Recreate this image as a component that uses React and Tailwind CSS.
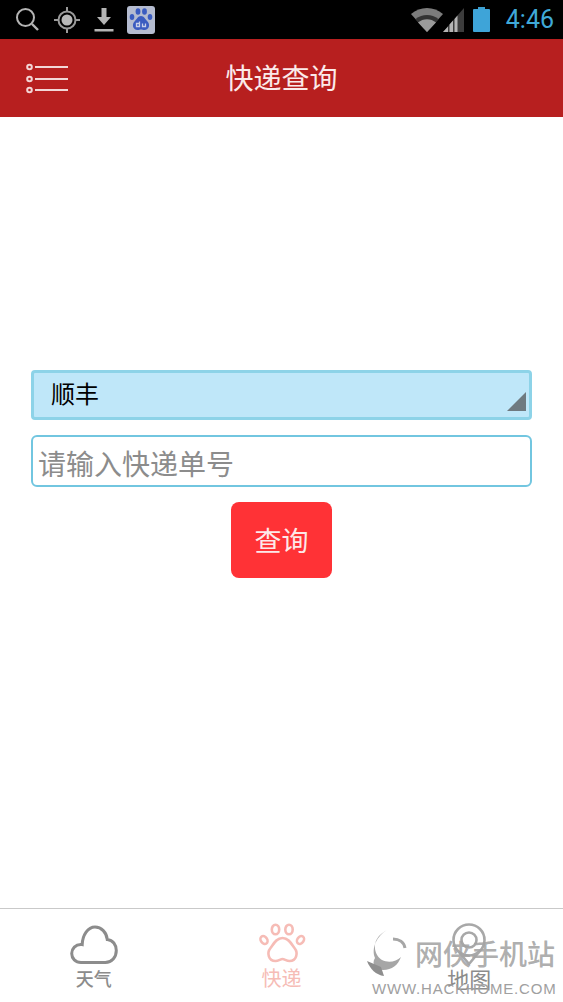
const cjk = { fontFamily: '"Noto Sans CJK SC", "Noto Sans", sans-serif' };
const Search = () => (
  <svg width="26" height="26" viewBox="0 0 26 26" fill="none" stroke="#b4b4b4" strokeWidth="2">
    <circle cx="10.500" cy="10.500" r="8.500" />
    <path d="M17 17l6 6" strokeWidth="2.400" />
  </svg>
);
const Gps = () => (
  <svg width="28" height="28" viewBox="0 0 28 28" fill="none" stroke="#9a9a9a" strokeWidth="2">
    <circle cx="14" cy="14" r="8.500" />
    <circle cx="14" cy="14" r="5.500" fill="#b8b8b8" stroke="none" />
    <path d="M14 1v4M14 23v4M1 14h4M23 14h4" />
  </svg>
);
const Download = () => (
  <svg width="22" height="28" viewBox="0 0 22 28" fill="#b4b4b4">
    <path d="M8.500 2h5v9h4.500l-7 8-7-8h4.500z" />
    <rect x="1.500" y="23" width="19" height="2.500" />
  </svg>
);
const Baidu = () => (
  <svg width="28" height="28" viewBox="0 0 28 28">
    <rect width="28" height="28" rx="3" fill="#b5bcd0" />
    <g fill="#3b5cc0">
      <ellipse cx="5" cy="11" rx="2.300" ry="3" />
      <ellipse cx="11" cy="5.500" rx="2.400" ry="3.200" />
      <ellipse cx="17.500" cy="5.500" rx="2.400" ry="3.200" />
      <ellipse cx="23" cy="11" rx="2.300" ry="3" />
      <path d="M14 10c3 0 4 3 6.500 5.500 3 3 1.500 8.500-3 8.500-1.500 0-2.500-.5-3.500-.5s-2 .5-3.500.5c-4.500 0-6-5.500-3-8.500C10 13 11 10 14 10z" />
    </g>
    <path d="M12.500 15.500v5h-3v-3h3M15.500 17.500v3h3v-3" fill="none" stroke="#c8d0e8" strokeWidth="1.300" />
  </svg>
);
const Wifi = () => (
  <svg width="32" height="24" viewBox="0 0 32 24">
    <path d="M16 24L0 6c9-8 23-8 32 0z" fill="#7c7c7c" />
    <path d="M16 24L4.500 11c7-5.500 16-5.500 23 0z" fill="#333" />
    <path d="M16 24L7 14.500c5-4.500 13-4.500 18 0z" fill="#9a9a9a" />
  </svg>
);
const Signal = () => (
  <svg width="21" height="24" viewBox="0 0 21 24">
    <path d="M0 24L21 0v24z" fill="#3c3c3c" />
    <path d="M0 24l5-5.500V24zM6.500 24v-7.500L10 12.500V24zM11.500 24V11l3-3.500V24z" fill="#b4b4b4" />
  </svg>
);
const Battery = () => (
  <svg width="17" height="25" viewBox="0 0 17 25">
    <rect x="5" y="0" width="7" height="3" fill="#3c9fd0" />
    <rect x="0" y="2" width="17" height="23" rx="1" fill="#3ea4d8" />
  </svg>
);
const Menu = () => (
  <svg width="44" height="32" viewBox="0 0 44 32" fill="none" stroke="#f3d6d6" strokeWidth="2">
    <circle cx="4.500" cy="4" r="2.300" />
    <circle cx="4.500" cy="16" r="2.300" />
    <circle cx="4.500" cy="27" r="2.300" />
    <path d="M10 4h33M10 16h33M10 27h33" />
  </svg>
);
const Cloud = () => (
  <svg width="48" height="40" viewBox="0 0 48 40" fill="none" stroke="#8c8c8c" strokeWidth="3">
    <path d="M11 37.500C5.500 37.500 1.700 33.500 1.700 28.500c0-5 4-9 9-9 .5 0 1 0 1.500.1C12.500 10 18 2 25 2c6.500 0 11.500 5.500 12.300 12.500 5.500.5 9 5 9 11 0 6.500-4.500 12-11 12z" />
  </svg>
);
const Paw = () => (
  <svg width="48" height="42" viewBox="0 0 48 42" fill="none" stroke="#f6bcb6" strokeWidth="2.600">
    <ellipse cx="6" cy="17" rx="3.200" ry="4.200" transform="rotate(-35 6 17)" />
    <ellipse cx="17.500" cy="6.500" rx="3.700" ry="4.800" />
    <ellipse cx="31" cy="6.500" rx="3.700" ry="4.800" />
    <ellipse cx="42.500" cy="17" rx="3.200" ry="4.200" transform="rotate(35 42.500 17)" />
    <path d="M24.500 15c6 0 9 6 12 10 4 5 2 13-5 13-3 0-5-2-7-2s-4 2-7 2c-7 0-9-8-5-13 3-4 6-10 12-10z" />
  </svg>
);
const Pin = () => (
  <svg width="40" height="42" viewBox="0 0 40 42" fill="none" stroke="#a8a8a8" strokeWidth="2.600">
    <circle cx="20" cy="17" r="15.500" />
    <circle cx="20" cy="17" r="7.500" />
    <path d="M10 29l10 12 10-12" />
  </svg>
);
const WatermarkLogo = () => (
  <svg width="42" height="46" viewBox="0 0 42 46">
    <path d="M20 0C11 5 7 11 8 19c1 6 4 9 7 11 6 3 14 2 19-3-3 8-9 13-18 13-3 0-6-1-8-2 -2-4-2-7 0-10C4 18 10 6 20 0z" fill="#a6a6a6" />
    <path d="M26 9c6 0 11 3 12 9" fill="none" stroke="#a6a6a6" strokeWidth="3" />
    <path d="M0 31l14 6 3 9C9 45 3 39 0 31z" fill="#8e8e8e" />
  </svg>
);
const Tab = ({ icon, label, color, size }) => (
  <div className="w-[188px] flex flex-col items-center pt-[14px]">
    <div className="h-[42px] flex items-end justify-center">{icon}</div>
    <div className={size} style={{ ...cjk, color }}>{label}</div>
  </div>
);
export default function App() {
  return (
    <div className="relative w-[563px] h-[1002px] bg-white flex flex-col overflow-hidden" style={cjk}>
      <div className="h-[39px] bg-black flex items-center justify-between pl-[15px] pr-[9px] shrink-0">
        <div className="flex items-center gap-[12px]">
          <Search /><Gps /><Download /><Baidu />
        </div>
        <div className="flex items-center">
          <Wifi />
          <Signal />
          <div className="ml-[9px]"><Battery /></div>
          <span className="ml-[16px] text-[25px] leading-none text-[#3fa9d8]" style={{ fontFamily: '"Roboto", sans-serif' }}>4:46</span>
        </div>
      </div>
      <div className="relative h-[78px] bg-[#b71f1f] flex items-center justify-center pb-[2px] shrink-0">
        <div className="absolute left-[25px] top-[24px]"><Menu /></div>
        <span className="text-[28px] leading-none text-[#fbeaea]">快递查询</span>
      </div>
      <div className="flex-1 px-[31px] pt-[253px]">
        <div className="relative h-[50px] rounded-[4px] border-[3px] border-[#8dd3e8] bg-[#bfe7f9] flex items-center pl-[17px] pb-[4px] text-[24px] text-black">
          顺丰
          <div className="absolute right-[3px] bottom-[6px] w-0 h-0 border-b-[19px] border-b-[#6f7a80] border-l-[19px] border-l-transparent" />
        </div>
        <div className="mt-[15px] h-[52px] rounded-[6px] border-2 border-[#72c6e0] flex items-center pl-[5px] pt-[3px] text-[28px] text-[#8c8c8c]">
          请输入快递单号
        </div>
        <div className="mt-[15px] mx-auto w-[101px] h-[76px] rounded-[8px] bg-[#ff3236] flex items-center justify-center text-[27px] text-[#fde8e8]">
          查询
        </div>
      </div>
      <div className="h-[94px] border-t border-[#c9c9c9] flex shrink-0">
        <Tab icon={<Cloud />} label="天气" color="#8c8c8c" size="text-[18px] leading-[24px] mt-[1px] font-medium" />
        <Tab icon={<Paw />} label="快递" color="#f6bcb6" size="text-[20px] leading-[24px] mt-[1px]" />
        <Tab icon={<Pin />} label="地图" color="#8c8c8c" size="text-[22px] leading-[24px] mt-[1px]" />
      </div>
      <div className="absolute left-[367px] top-[930px]"><WatermarkLogo /></div>
      <div className="absolute left-[415px] top-[934px] text-[28px] leading-[38px] text-[#a4a4a4]/90 font-medium whitespace-nowrap">网侠手机站</div>
      <div className="absolute left-[372px] top-[979px] text-[15px] leading-[20px] tracking-[0.8px] text-[#a0a0a0] whitespace-nowrap" style={{ fontFamily: '"Liberation Sans", sans-serif' }}>WWW.HACKHOME.COM</div>
    </div>
  );
}
